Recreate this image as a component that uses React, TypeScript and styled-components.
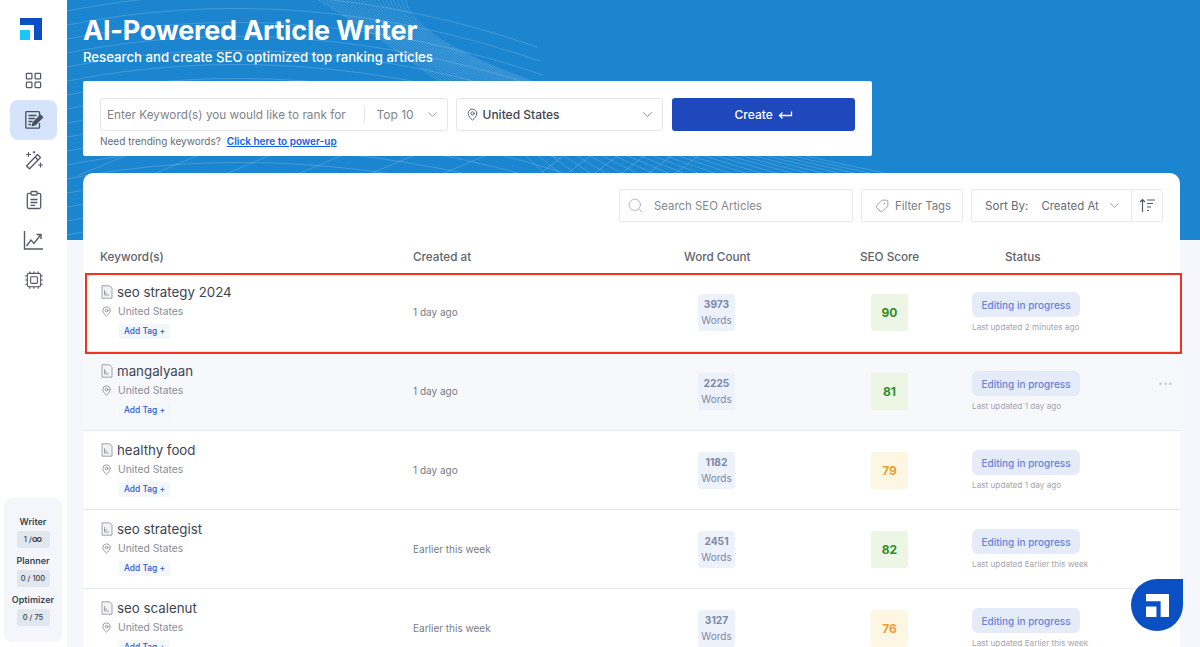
import React from 'react'
import styled, { createGlobalStyle } from 'styled-components'
import { ChevronDown, MapPin, Search, Tag, LayoutGrid, Cpu } from 'lucide-react'

const GlobalStyle = createGlobalStyle`
  html, body { margin: 0; padding: 0; height: 100%; overflow: hidden; }
  body { font-family: Inter, "Liberation Sans", sans-serif; background: #f6f7fc; color: #3a4254; }
  * { box-sizing: border-box; }
`

const Shell = styled.div`
  display: flex;
  width: 1200px;
  height: 647px;
  overflow: hidden;
  position: relative;
`

const Sidebar = styled.aside`
  width: 67px;
  flex: none;
  background: #fff;
  display: flex;
  flex-direction: column;
  align-items: center;
  padding: 18px 0 5px;
`

const SideLogo = styled.div`
  display: flex;
  margin-right: 5px;
`

const NavList = styled.nav`
  display: flex;
  flex-direction: column;
  align-items: center;
  margin-top: 20px;
  width: 100%;
`

const NavItem = styled.div<{ $active?: boolean }>`
  width: 47px;
  height: 40px;
  display: flex;
  align-items: center;
  justify-content: center;
  border-radius: 8px;
  background: ${(p) => (p.$active ? '#d5e4fa' : 'transparent')};
  color: #555a66;
`

const Usage = styled.div`
  margin-top: auto;
  width: 58px;
  height: 144px;
  margin-right: 1px;
  border-radius: 8px;
  background: #f5f6fb;
  display: flex;
  flex-direction: column;
  align-items: center;
  padding-top: 18px;
`

const UsageLabel = styled.div`
  font-size: 9px;
  line-height: 12px;
  font-weight: 600;
  color: #3c4454;
`

const UsageValue = styled.div`
  width: 33px;
  height: 17px;
  margin: 3px 0 7px;
  border-radius: 3px;
  background: #e2e6ee;
  font-size: 7.5px;
  font-weight: 500;
  color: #3c4454;
  display: flex;
  align-items: center;
  justify-content: center;
  white-space: pre;
`

const Infinite = styled.span`
  font-size: 11px;
  line-height: 11px;
`

const Main = styled.main`
  flex: 1;
  min-width: 0;
  display: flex;
  flex-direction: column;
`

const Hero = styled.header`
  position: relative;
  height: 240px;
  flex: none;
  background: #1c85cf;
  padding: 14px 16px 0;
  overflow: hidden;
`

const HeroWaves = styled.svg`
  position: absolute;
  left: 0;
  top: 0;
`

const HeroTitle = styled.h1`
  position: relative;
  margin: 0;
  font-size: 27px;
  line-height: 34px;
  font-weight: 700;
  letter-spacing: -0.2px;
  color: #fff;
`

const HeroSub = styled.p`
  position: relative;
  margin: 0;
  font-size: 13.2px;
  line-height: 18px;
  font-weight: 500;
  color: #fff;
`

const CreateCard = styled.section`
  position: relative;
  width: 789px;
  height: 75px;
  margin-top: 15px;
  padding: 17px 17px 0;
  background: #fff;
  border-radius: 2px;
`

const CreateRow = styled.div`
  display: flex;
  gap: 8px;
  height: 33px;
`

const Field = styled.div`
  border: 1px solid #e4e6ea;
  border-radius: 3px;
  display: flex;
  align-items: center;
  font-size: 12px;
  color: #7f838b;
`

const KeywordField = styled(Field)`
  width: 348px;
`

const CountryField = styled(Field)`
  width: 208px;
  padding: 0 6px 0 9px;
`

const KeywordText = styled.span`
  flex: 1;
  padding-left: 6px;
  font-size: 11.75px;
  white-space: nowrap;
`

const TopSelect = styled.span`
  width: 83px;
  height: 19px;
  border-left: 1px solid #e4e6ea;
  padding: 0 7px 0 12px;
  display: flex;
  align-items: center;
  justify-content: space-between;
`

const CountryText = styled.span`
  flex: 1;
  margin-left: 4px;
  font-weight: 500;
  color: #3c4454;
`

const CreateButton = styled.button`
  width: 183px;
  margin-left: 1px;
  border: 0;
  border-radius: 3px;
  background: #2048bd;
  color: #fff;
  font: 500 12px Inter, sans-serif;
  display: flex;
  align-items: center;
  justify-content: center;
  gap: 5px;
`

const Hint = styled.div`
  margin-top: 4px;
  font-size: 10px;
  line-height: 13px;
  color: #666b75;
`

const HintLink = styled.a`
  margin-left: 6px;
  font-weight: 600;
  color: #0f62e6;
  text-decoration: underline;
`

const TableCard = styled.section`
  position: relative;
  width: 1097px;
  margin: -67px 0 0 16px;
  background: #fff;
  border-radius: 10px 10px 0 0;
  flex: 1;
`

const Toolbar = styled.div`
  height: 67px;
  padding: 16px 17px 0 0;
  display: flex;
  justify-content: flex-end;
  gap: 8px;
`

const ToolBox = styled.div`
  height: 33px;
  border: 1px solid #e8eaee;
  border-radius: 2px;
  display: flex;
  align-items: center;
  font-size: 11.4px;
  color: #777b83;
`

const SearchBox = styled(ToolBox)`
  width: 234px;
  padding-left: 7px;
`

const FilterBox = styled(ToolBox)`
  width: 102px;
  padding-left: 13px;
  gap: 6px;
`

const SortBox = styled(ToolBox)`
  width: 192px;
`

const FlippedTag = styled(Tag)`
  transform: scaleX(-1);
`

const SearchText = styled.span`
  margin-left: 10px;
  color: #85888f;
`

const SortLabel = styled.span`
  margin-left: 13px;
  font-size: 11.6px;
  color: #666a72;
`

const SortValue = styled.span`
  margin-left: 13px;
  color: #666a72;
`

const SortChevron = styled(ChevronDown)`
  margin-left: 8px;
`

const SortEnd = styled.span`
  margin-left: auto;
  width: 31px;
  height: 100%;
  border-left: 1px solid #e8eaee;
  display: flex;
  align-items: center;
  justify-content: center;
`

const Columns = styled.div`
  display: grid;
  grid-template-columns: 330px 238px 140px 130px 1fr;
  align-items: center;
`

const HeadRow = styled(Columns)`
  height: 33px;
  font-size: 11.7px;
  font-weight: 500;
  color: #5e626b;
`

const HeadCell = styled.div<{ $left: number }>`
  padding-left: ${(p) => p.$left}px;
  white-space: nowrap;
`

const Row = styled(Columns)<{ $hover?: boolean; $marked?: boolean }>`
  position: relative;
  height: 79px;
  background: ${(p) => (p.$hover ? '#f6f8fb' : '#fff')};
  border-bottom: 1px solid #e6e8ed;
  ${(p) => p.$marked && `
    &::after {
      content: '';
      position: absolute;
      z-index: 2;
      left: 2px;
      right: -2px;
      top: 0;
      height: 77px;
      border: 2px solid #f0331f;
      pointer-events: none;
    }
  `}
`

const KeywordCell = styled.div`
  align-self: start;
  padding: 10px 0 0 18px;
`

const Title = styled.div`
  display: flex;
  align-items: center;
  gap: 4px;
  font-size: 13.3px;
  line-height: 18px;
  color: #3c4454;
`

const Country = styled.div`
  display: flex;
  align-items: center;
  gap: 6px;
  margin-top: 1px;
  font-size: 10.3px;
  line-height: 18px;
  color: #888c94;
`

const AddTag = styled.div`
  width: fit-content;
  margin: 4px 0 0 18px;
  padding: 0 5px;
  height: 15px;
  line-height: 15px;
  border-radius: 2px;
  background: #f3f6fb;
  font-size: 8.4px;
  font-weight: 500;
  color: #2b5ad0;
`

const DateCell = styled.div`
  font-size: 10px;
  color: #777b83;
`

const WordsCell = styled.div`
  display: flex;
  padding-left: 47px;
`

const WordsBadge = styled.div`
  width: 37px;
  height: 37px;
  border-radius: 3px;
  background: #edf1fa;
  display: flex;
  flex-direction: column;
  align-items: center;
  justify-content: center;
  font-size: 10px;
  line-height: 16px;
  color: #7a88a8;
`

const WordCount = styled.span`
  font-size: 10.2px;
  font-weight: 700;
`

const ScoreCell = styled.div`
  display: flex;
  padding-left: 80px;
`

const Score = styled.div<{ $bg: string; $fg: string }>`
  width: 37px;
  height: 37px;
  border-radius: 3px;
  background: ${(p) => p.$bg};
  color: ${(p) => p.$fg};
  font-size: 12px;
  font-weight: 700;
  display: flex;
  align-items: center;
  justify-content: center;
`

const StatusCell = styled.div`
  padding-left: 51px;
  display: flex;
  flex-direction: column;
  align-items: flex-start;
`

const StatusPill = styled.div`
  width: 108px;
  height: 25px;
  margin-top: 1px;
  border-radius: 6px;
  background: #e5ebf8;
  color: #6384d8;
  font-size: 10px;
  font-weight: 500;
  display: flex;
  align-items: center;
  justify-content: center;
`

const Updated = styled.div`
  margin-top: 4px;
  font-size: 8.2px;
  line-height: 12px;
  color: #a3a6ad;
  white-space: nowrap;
`

const MoreDots = styled.div`
  position: absolute;
  right: 7px;
  top: 26px;
  font-size: 8px;
  line-height: 10px;
  letter-spacing: 0.4px;
  color: #c9ccd3;
`

const Fab = styled.div`
  position: absolute;
  left: 1131px;
  top: 579px;
  width: 52px;
  height: 52px;
  background: #0a50c4;
  border-radius: 50% 0 50% 50%;
  display: flex;
  align-items: center;
  justify-content: center;
`

// brand mark, used in the sidebar and on the chat button
const LogoMark = ({ size, outer, inner }: { size: number; outer: string; inner: string }) => (
  <svg width={size} height={size} viewBox="0 0 22 22">
    <path d="M0 0H22V22H14V7H0Z" fill={outer} />
    <rect x="0" y="12" width="10" height="10" fill={inner} />
  </svg>
)

const ArticleEditIcon = () => (
  <svg width="20" height="20" viewBox="0 0 20 20" fill="none" stroke="#4a5060" strokeWidth="1.3">
    <path d="M15.5 6.5V2.5A.8.8 0 0 0 14.7 1.7H2.6A.8.8 0 0 0 1.8 2.5V17.4A.8.8 0 0 0 2.6 18.2H14.7A.8.8 0 0 0 15.5 17.4V13" />
    <path d="M4.5 5.5H12.5M4.5 8.5H11M4.5 11.5H8.5M4.5 14.5H7" />
    <path d="M8.5 15.5L9.2 12.5L16.5 5.2L18.6 7.3L11.4 14.7Z" fill="#4a5060" />
  </svg>
)

const WandIcon = () => (
  <svg width="20" height="20" viewBox="0 0 20 20" fill="none" stroke="#555a66" strokeWidth="1.3" strokeLinejoin="round">
    <path d="M2.5 16L13.5 4.5L16.5 7.5L5.5 18.8Z" />
    <path d="M11 7L14 10" />
    <path d="M4.5 2V7M2 4.5H7M16.5 12.5V17.5M14 15H19M10 1V3.5M8.8 2.2H11.2" strokeWidth="1.1" />
  </svg>
)

const ClipboardIcon = () => (
  <svg width="20" height="20" viewBox="0 0 20 20" fill="none" stroke="#555a66" strokeWidth="1.3">
    <path d="M7 3.3H4.8A1.5 1.5 0 0 0 3.3 4.8V17A1.5 1.5 0 0 0 4.8 18.5H15.2A1.5 1.5 0 0 0 16.7 17V4.8A1.5 1.5 0 0 0 15.2 3.3H13" />
    <rect x="7" y="1.5" width="6" height="3.5" rx="0.8" />
    <path d="M6.5 9.5H13.5M6.5 12.5H13.5M6.5 15.3H11" />
  </svg>
)

const ChartIcon = () => (
  <svg width="21" height="21" viewBox="0 0 21 21" fill="none" stroke="#555a66" strokeWidth="1.4">
    <path d="M1.5 1V19H20" />
    <path d="M3.5 16L8 10L11 13.5L17.5 5" />
    <path d="M13.5 4.5H18V9" />
  </svg>
)

const DocIcon = () => (
  <svg width="12" height="14" viewBox="0 0 12 14" fill="#f2f3f5" stroke="#8a8e97" strokeWidth="0.8">
    <path d="M1 .8H8.5L11 3.3V13.2H1Z" />
    <path d="M3.5 5V10H8M3.5 8H6" fill="none" />
  </svg>
)

const SortIcon = () => (
  <svg width="17" height="15" viewBox="0 0 17 15" fill="none" stroke="#555a66" strokeWidth="1.2">
    <path d="M3.5 14V1.5M1 4L3.5 1.5L6 4M8 2H16M8 5.5H14M8 9H12M8 12.5H10" />
  </svg>
)

const ReturnArrow = () => (
  <svg width="15" height="11" viewBox="0 0 15 11" fill="none" stroke="#ffffff" strokeWidth="1.3">
    <path d="M1.5 6.5H13.5V2.5M4.5 3.5L1.5 6.5L4.5 9.5" />
  </svg>
)

const WavePaths = () => {
  const lines: string[] = []
  // long arcs on the left, rising to a crest then falling into the net
  for (let i = 0; i < 17; i++) {
    const y = 12 + i * 14
    lines.push(`M-5 ${y} Q 230 ${y - 48}, ${470 + i * 3} ${y + 35}`)
  }
  // the fan of curves running from the top to the lower right
  for (let i = 0; i < 23; i++) {
    const x0 = 250 + i * 4
    const x1 = 373 + i * 4.3
    const x2 = 480 + i * 16
    lines.push(`M${x0} -1 Q ${2 * x1 - (x0 + x2) / 2} 77, ${x2} 176`)
  }
  // slanted strokes that show in the gap under the create card
  for (let i = 0; i < 6; i++) {
    const x = 10 + i * 72
    lines.push(`M${x} 176 L${x + 62} 150`)
  }
  for (let i = 0; i < 6; i++) {
    const x = 470 + i * 27
    lines.push(`M${x} 176 L${x + 34} 150`)
  }
  return (
    <HeroWaves width="1133" height="240" viewBox="0 0 1133 240" fill="none" stroke="#ffffff" strokeOpacity="0.22" strokeWidth="0.8">
      {lines.map((d) => (
        <path key={d} d={d} />
      ))}
    </HeroWaves>
  )
}

const scoreColours: Record<string, { bg: string; fg: string }> = {
  green: { bg: '#edf5e4', fg: '#2e8f1c' },
  amber: { bg: '#fdf6e3', fg: '#eba02f' },
}

const articles = [
  { title: 'seo strategy 2024', date: '1 day ago', words: 3973, score: 90, tone: 'green', updated: 'Last updated 2 minutes ago', marked: true },
  { title: 'mangalyaan', date: '1 day ago', words: 2225, score: 81, tone: 'green', updated: 'Last updated 1 day ago', hover: true },
  { title: 'healthy food', date: '1 day ago', words: 1182, score: 79, tone: 'amber', updated: 'Last updated 1 day ago' },
  { title: 'seo strategist', date: 'Earlier this week', words: 2451, score: 82, tone: 'green', updated: 'Last updated Earlier this week' },
  { title: 'seo scalenut', date: 'Earlier this week', words: 3127, score: 76, tone: 'amber', updated: 'Last updated Earlier this week' },
]

const usage = [
  { label: 'Writer', value: <>1 /<Infinite>∞</Infinite></> },
  { label: 'Planner', value: '0 / 100' },
  { label: 'Optimizer', value: '0 / 75' },
]

export default function App() {
  return (
    <Shell>
      <GlobalStyle />
      <Sidebar>
        <SideLogo><LogoMark size={22} outer="#0a50c4" inner="#19c8fa" /></SideLogo>
        <NavList>
          <NavItem><LayoutGrid size={19} strokeWidth={1.6} /></NavItem>
          <NavItem $active><ArticleEditIcon /></NavItem>
          <NavItem><WandIcon /></NavItem>
          <NavItem><ClipboardIcon /></NavItem>
          <NavItem><ChartIcon /></NavItem>
          <NavItem><Cpu size={20} strokeWidth={1.3} /></NavItem>
        </NavList>
        <Usage>
          {usage.map((u) => (
            <React.Fragment key={u.label}>
              <UsageLabel>{u.label}</UsageLabel>
              <UsageValue>{u.value}</UsageValue>
            </React.Fragment>
          ))}
        </Usage>
      </Sidebar>
      <Main>
        <Hero>
          <WavePaths />
          <HeroTitle>AI-Powered Article Writer</HeroTitle>
          <HeroSub>Research and create SEO optimized top ranking articles</HeroSub>
          <CreateCard>
            <CreateRow>
              <KeywordField>
                <KeywordText>Enter Keyword(s) you would like to rank for</KeywordText>
                <TopSelect>Top 10 <ChevronDown size={15} strokeWidth={1.2} /></TopSelect>
              </KeywordField>
              <CountryField>
                <MapPin size={13} strokeWidth={1.5} color="#3c4454" />
                <CountryText>United States</CountryText>
                <ChevronDown size={17} strokeWidth={1.2} />
              </CountryField>
              <CreateButton>Create <ReturnArrow /></CreateButton>
            </CreateRow>
            <Hint>Need trending keywords?<HintLink>Click here to power-up</HintLink></Hint>
          </CreateCard>
        </Hero>
        <TableCard>
          <Toolbar>
            <SearchBox>
              <Search size={17} strokeWidth={1} color="#9a9da4" />
              <SearchText>Search SEO Articles</SearchText>
            </SearchBox>
            <FilterBox>
              <FlippedTag size={14} strokeWidth={1.2} />
              Filter Tags
            </FilterBox>
            <SortBox>
              <SortLabel>Sort By:</SortLabel>
              <SortValue>Created At</SortValue>
              <SortChevron size={15} strokeWidth={1.1} />
              <SortEnd><SortIcon /></SortEnd>
            </SortBox>
          </Toolbar>
          <HeadRow>
            <HeadCell $left={17}>Keyword(s)</HeadCell>
            <HeadCell $left={0}>Created at</HeadCell>
            <HeadCell $left={33}>Word Count</HeadCell>
            <HeadCell $left={69}>SEO Score</HeadCell>
            <HeadCell $left={84}>Status</HeadCell>
          </HeadRow>
          {articles.map((a) => (
            <Row key={a.title} $hover={a.hover} $marked={a.marked}>
              <KeywordCell>
                <Title><DocIcon />{a.title}</Title>
                <Country><MapPin size={11} strokeWidth={1.4} color="#666a72" />United States</Country>
                <AddTag>Add Tag +</AddTag>
              </KeywordCell>
              <DateCell>{a.date}</DateCell>
              <WordsCell>
                <WordsBadge><WordCount>{a.words}</WordCount>Words</WordsBadge>
              </WordsCell>
              <ScoreCell>
                <Score $bg={scoreColours[a.tone].bg} $fg={scoreColours[a.tone].fg}>{a.score}</Score>
              </ScoreCell>
              <StatusCell>
                <StatusPill>Editing in progress</StatusPill>
                <Updated>{a.updated}</Updated>
              </StatusCell>
              {a.hover && <MoreDots>•••</MoreDots>}
            </Row>
          ))}
        </TableCard>
      </Main>
      <Fab><LogoMark size={23} outer="#ffffff" inner="#ffffff" /></Fab>
    </Shell>
  )
}
